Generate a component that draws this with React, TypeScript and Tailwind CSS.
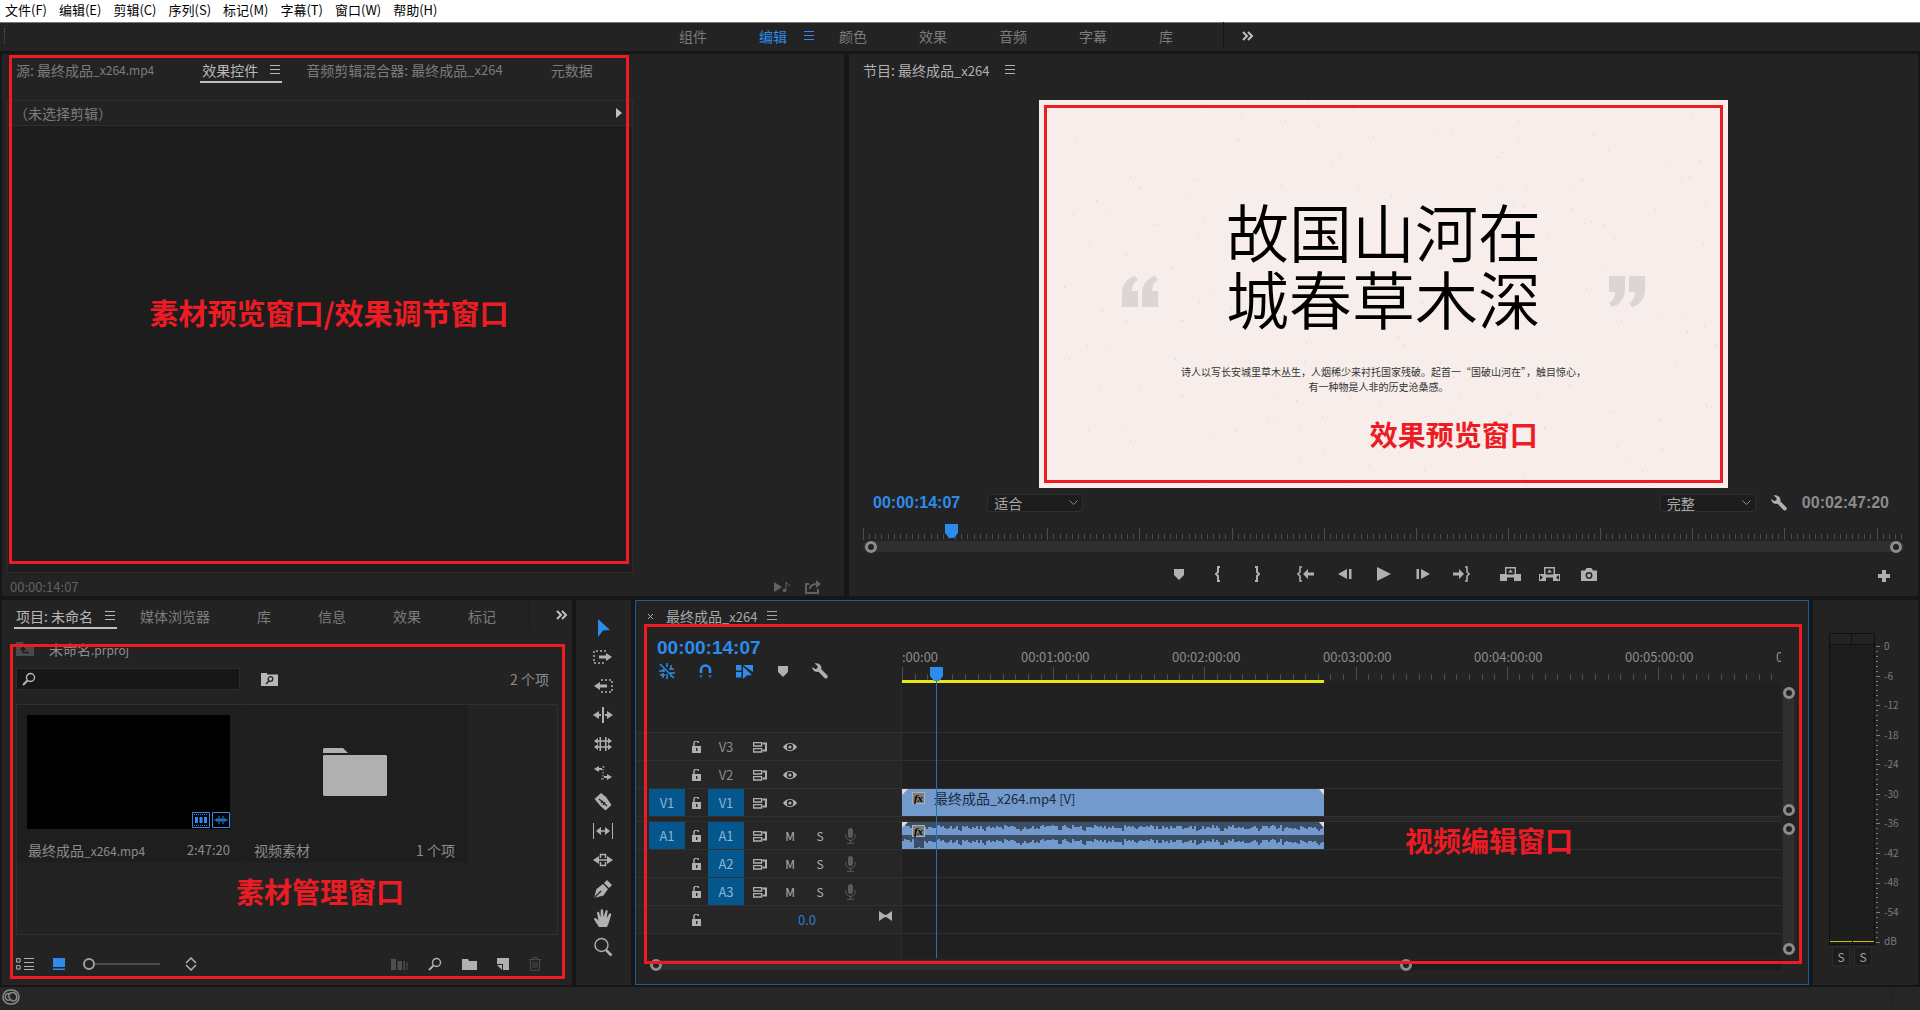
import { ReactNode } from 'react';

type IconProps = { children: ReactNode; w?: number; h?: number; className?: string };

function Svg({ children, w = 20, h = 20, className = '' }: IconProps) {
  return (
    <svg
      width={w}
      height={h}
      viewBox={`0 0 ${w} ${h}`}
      fill="currentColor"
      className={`shrink-0 ${className}`}
      aria-hidden="true"
    >
      {children}
    </svg>
  );
}

const MenuLines = () => (
  <Svg w={10} h={10}>
    <path d="M0 0h10v1H0zM0 4h10v1H0zM0 8h10v1H0z" />
  </Svg>
);

const Chevrons = () => (
  <Svg w={12} h={10} className="text-[#c0c0c0]">
    <path d="M1 1l4 4-4 4M6 1l4 4-4 4" fill="none" stroke="currentColor" strokeWidth="2" />
  </Svg>
);

const Magnifier = () => (
  <Svg w={14} h={14}>
    <g fill="none" stroke="currentColor">
      <circle cx="8.5" cy="5.5" r="4" strokeWidth="1.4" />
      <path d="M5.5 8.5L1 13" strokeWidth="2" />
    </g>
  </Svg>
);

const Wrench = () => (
  <Svg w={16} h={16}>
    <path d="M2.500.5C5.500-.5 9 1 9.400 4.600L9.300 6.200l6.200 6.300c1.200 1.600-1.400 4-3 2.600L6.600 8.800C3.500 9.600.3 7.400.2 4L3.200 6 5.600 5.300 5.400 2.800z" />
  </Svg>
);

const Marker = () => (
  <Svg w={10} h={12}>
    <path d="M0 1h10v6l-5 5-5-5z" />
  </Svg>
);

const Playhead = () => (
  <Svg w={13} h={14} className="text-[#2d8ceb]">
    <path d="M0 0h13v9l-4 5H4L0 9z" />
  </Svg>
);

const Lock = () => (
  <Svg w={10} h={12}>
    <path d="M0 5h9v7H0z" />
    <path d="M2 5V2.500a2 2 0 0 1 4.500-.5" fill="none" stroke="currentColor" strokeWidth="1.400" />
    <path d="M4 7h1.400v3H4z" fill="#232323" />
  </Svg>
);

const SyncLock = () => (
  <Svg w={14} h={12}>
    <g fill="none" stroke="currentColor" strokeWidth="1.300">
      <path d="M.6 1.600h8v3.400h-8zM.6 7.600h8V11h-8z" />
      <path d="M9.500 2.600H13v6.800H9.500" strokeWidth="2" />
    </g>
  </Svg>
);

const Eye = () => (
  <Svg w={14} h={10}>
    <path d="M0 5C3.500-.5 10.500-.5 14 5 10.500 10.500 3.500 10.500 0 5z" />
    <circle cx="7" cy="5" r="3.200" fill="#232323" />
    <circle cx="7" cy="5" r="1.600" />
  </Svg>
);

const Mic = () => (
  <Svg w={11} h={16} className="text-[#5a5a5a]">
    <rect x="3" y="0" width="5" height="10" rx="2.500" />
    <path d="M.8 6v2.500c0 5 9.400 5 9.400 0V6M5.500 12v3M2 15.300h7" fill="none" stroke="currentColor" />
  </Svg>
);

const CreativeCloud = () => (
  <Svg w={18} h={16} className="text-[#8a8a8a]">
    <g fill="none" stroke="currentColor" strokeWidth="1.500">
      <rect x="1" y="1" width="16" height="14" rx="7" />
      <path d="M8 5.200C5.500 3.300 3.200 5.500 3.300 8c.1 3 3.200 4.300 5.200 2.500" />
      <path d="M7 8.500c-1-4 2-5.500 4.500-5 3.600.7 4.300 5.500 2 7.700-2.300 2-4.500.3-6.500-2.700" />
    </g>
  </Svg>
);

type TabProps = { children: ReactNode; active?: boolean };

function Tab({ children, active = false }: TabProps) {
  return (
    <button
      type="button"
      className={`flex h-[29px] shrink-0 items-center border-b-2 px-[2px] pt-1 whitespace-nowrap ${
        active ? 'border-[#c0c0c0] text-[#b8b8b8]' : 'border-transparent text-[#7c7c7c]'
      }`}
    >
      {children}
      <span className="flex w-[22px] justify-end">{active && <MenuLines />}</span>
    </button>
  );
}

const Latin = ({ children }: { children: ReactNode }) => <span className="text-[13px]">{children}</span>;

const menus = ['文件(F)', '编辑(E)', '剪辑(C)', '序列(S)', '标记(M)', '字幕(T)', '窗口(W)', '帮助(H)'];
const workspaces = ['组件', '编辑', '颜色', '效果', '音频', '字幕', '库'];

function Header() {
  return (
    <header>
      <nav className="flex h-[23px] items-center gap-3 border-b border-[#777] bg-white px-[5px] pb-[2px] text-[13px] leading-4 text-black">
        {menus.map((menu) => (
          <button type="button" key={menu}>
            {menu}
          </button>
        ))}
      </nav>
      <nav className="flex h-7 items-center bg-[#232323] pb-[2px] text-[#7c7c7c]">
        <div className="ml-1 h-4 border-l border-dotted border-[#555]" />
        <div className="flex w-full items-center pl-[674px]">
          {workspaces.map((name) => (
            <button
              type="button"
              key={name}
              className={`flex w-20 items-center gap-[17px] ${name === '编辑' ? 'text-[#2d8ceb]' : ''}`}
            >
              {name}
              {name === '编辑' && <MenuLines />}
            </button>
          ))}
          <button type="button" aria-label="更多" className="-ml-4 flex h-7 items-center border-l border-[#181818] pl-[18px]">
            <Chevrons />
          </button>
        </div>
      </nav>
    </header>
  );
}

function EffectControls() {
  return (
    <section className="relative flex flex-col bg-[#232323] pr-[22px] pl-[5px]">
      <div className="flex h-[46px] gap-[22px] pl-[7px]">
        <Tab>
          源: 最终成品<span className="text-xs">_x264.mp4</span>
        </Tab>
        <Tab active>效果控件</Tab>
        <Tab>
          音频剪辑混合器: 最终成品<Latin>_x264</Latin>
        </Tab>
        <Tab>元数据</Tab>
      </div>
      <div className="flex w-[626px] flex-1 flex-col border border-[#2c2c2c] bg-[#1d1d1d]">
        <div className="flex h-[25px] items-center justify-between border-b border-[#2f2f2f] bg-[#232323] pr-[10px] pl-[6px] text-[#7c7c7c]">
          （未选择剪辑）
          <Svg w={6} h={10} className="text-[#c0c0c0]">
            <path d="M0 0l6 5-6 5z" />
          </Svg>
        </div>
      </div>
      <div className="flex h-[23px] items-center justify-between pt-1 pl-[3px] text-[13px] text-[#626262]">
        <span>00:00:14:07</span>
        <span className="flex gap-[14px]">
          <Svg w={17} h={14}>
            <path d="M0 2l8 5-8 5z" />
            <path d="M12 2v8M12 2l4 4" fill="none" stroke="currentColor" />
            <circle cx="10.500" cy="10.500" r="1.800" />
          </Svg>
          <Svg w={17} h={14}>
            <path d="M4 4H1v9h12V9M5 9c0-4 3-5 7-5" fill="none" stroke="currentColor" strokeWidth="2" />
            <path d="M11 0l5 4-5 4z" />
          </Svg>
        </span>
      </div>
      <div className="absolute top-px bottom-8 left-[7px] flex w-[620px] items-center justify-center border-[3px] border-[#ed1c24] pt-1 pl-5 text-[29px] font-bold text-[#ed1c24]">
        素材预览窗口/效果调节窗口
      </div>
    </section>
  );
}

function Quote({ flip = false }: { flip?: boolean }) {
  return (
    <Svg w={36} h={31} className={`mt-20 text-[#ddd5d3] ${flip ? 'rotate-180' : ''}`}>
      <path d="M13 0l3 4c-4 2-6 6-6 11h6v16H0V17C0 9 5 2 13 0zM33 0l3 4c-4 2-6 6-6 11h6v16H20V17C20 9 25 2 33 0z" />
    </Svg>
  );
}

// paper grain: fixed pseudo-random specks
const specks = Array.from({ length: 320 }, (_, i) => ({
  x: (i * 197 + ((i * i * 31) % 89)) % 689,
  y: (i * 113 + ((i * i * 17) % 61)) % 388,
}));

function VideoFrame() {
  return (
    <div className="relative aspect-[689/388] h-full bg-[#f7eeeb] text-black">
      <svg viewBox="0 0 689 388" className="absolute inset-0 h-full w-full" aria-hidden="true">
        {specks.map((s, i) => (
          <rect key={i} x={s.x} y={s.y} width="1" height={1 + (i % 2)} fill="#e3d9d5" />
        ))}
      </svg>
      <div className="relative flex flex-col items-center pt-24">
        <div className="flex gap-[68px]">
          <Quote />
          <h1 className="text-[63px] leading-[67px] font-[350] whitespace-nowrap">
            故国山河在
            <br />
            城春草木深
          </h1>
          <Quote flip />
        </div>
        <p className="mt-[34px] text-center text-[10px] leading-[15px] whitespace-nowrap text-[#333]">
          诗人以写长安城里草木丛生，人烟稀少来衬托国家残破。起首一“国破山河在”，触目惊心，
          <br />
          有一种物是人非的历史沧桑感。&emsp;
        </p>
      </div>
      <div className="absolute inset-[5px] border-[3px] border-[#ed1c24]" />
      <p className="absolute top-[318px] left-[48%] text-[28px] leading-8 font-bold whitespace-nowrap text-[#ed1c24]">
        效果预览窗口
      </p>
    </div>
  );
}

function Dropdown({ label, value }: { label: string; value: string }) {
  return (
    <span className="relative flex items-center">
      <select
        aria-label={label}
        className="h-[18px] w-24 appearance-none rounded-[2px] border border-[#2e2e2e] bg-[#1d1d1d] pl-[6px] text-sm leading-4 text-[#a8a8a8]"
      >
        <option>{value}</option>
      </select>
      <Svg w={9} h={6} className="absolute right-[5px] text-[#8a8a8a]">
        <path d="M.5.5l4 4 4-4" fill="none" stroke="currentColor" />
      </Svg>
    </span>
  );
}

const Ring = () => <span className="size-3 shrink-0 rounded-full border-[3px] border-[#8c8c8c] bg-[#232323]" />;

const transport: { name: string; icon: ReactNode }[][] = [
  [
    { name: '添加标记', icon: <Marker /> },
    {
      name: '标记入点',
      icon: (
        <Svg w={6} h={16}>
          <path d="M5 1H3v5L1 8l2 2v5h2" fill="none" stroke="currentColor" strokeWidth="2" />
        </Svg>
      ),
    },
    {
      name: '标记出点',
      icon: (
        <Svg w={6} h={16}>
          <path d="M1 1h2v5l2 2-2 2v5H1" fill="none" stroke="currentColor" strokeWidth="2" />
        </Svg>
      ),
    },
  ],
  [
    {
      name: '转到入点',
      icon: (
        <Svg w={17} h={16}>
          <path d="M5 1H3v5L1 8l2 2v5h2" fill="none" stroke="currentColor" strokeWidth="1.600" />
          <path d="M6 8l5-5v3.500h6v3h-6V13z" />
        </Svg>
      ),
    },
    {
      name: '后退一帧',
      icon: (
        <Svg w={14} h={12}>
          <path d="M9 1v10L0 6zM11 1h2.500v10H11z" />
        </Svg>
      ),
    },
    {
      name: '播放',
      icon: (
        <Svg w={14} h={14}>
          <path d="M0 0l14 7-14 7z" />
        </Svg>
      ),
    },
    {
      name: '前进一帧',
      icon: (
        <Svg w={14} h={12}>
          <path d="M5 1v10l9-5zM.5 1H3v10H.5z" />
        </Svg>
      ),
    },
    {
      name: '转到出点',
      icon: (
        <Svg w={17} h={16}>
          <path d="M12 1h2v5l2 2-2 2v5h-2" fill="none" stroke="currentColor" strokeWidth="1.600" />
          <path d="M11 8L6 3v3.500H0v3h6V13z" />
        </Svg>
      ),
    },
  ],
  [
    {
      name: '提升',
      icon: (
        <Svg w={21} h={14}>
          <path d="M0 7h7v7H0zM14 7h7v7h-7zM10.500 2.500l2.500 3H8zM7 9h7v1.400H7z" />
          <path d="M5.700.7h9.600v7.600H5.700z" fill="none" stroke="currentColor" strokeWidth="1.400" />
        </Svg>
      ),
    },
    {
      name: '提取',
      icon: (
        <Svg w={21} h={14}>
          <path d="M0 7h7v7H0zM14 7h7v7h-7zM10.500 2.500l2.500 3H8zM7 9h7v1.400H7z" />
          <path d="M5.700.7h9.600v7.600H5.700z" fill="none" stroke="currentColor" strokeWidth="1.400" />
          <path d="M1 8l3 2.500L1 13zM20 8l-3 2.500 3 2.500z" fill="#232323" />
        </Svg>
      ),
    },
    {
      name: '导出帧',
      icon: (
        <Svg w={16} h={13}>
          <path d="M0 2.500h4L5.500 0h5L12 2.500h4V13H0z" />
          <circle cx="8" cy="7.500" r="2.700" fill="none" stroke="#232323" strokeWidth="1.500" />
        </Svg>
      ),
    },
  ],
];

function ProgramMonitor() {
  const ticks = Array.from({ length: 170 }, (_, i) => i);
  return (
    <section className="flex flex-col bg-[#232323] px-[14px]">
      <div className="flex h-[46px]">
        <button type="button" className="flex h-8 items-center gap-4 text-[#b0b0b0]">
          <span>
            节目: 最终成品<Latin>_x264</Latin>
          </span>
          <MenuLines />
        </button>
      </div>
      <div className="flex min-h-0 flex-1 basis-[388px] justify-center">
        <VideoFrame />
      </div>
      <div className="flex h-[26px] items-center justify-between pt-[3px] pr-[15px] pl-[10px]">
        <div className="flex items-center gap-[27px]">
          <span className="font-[Liberation_Sans] text-base font-bold text-[#2d8ceb]">00:00:14:07</span>
          <Dropdown label="选择缩放级别" value="适合" />
        </div>
        <div className="flex items-center gap-[15px] text-[#b0b0b0]">
          <Dropdown label="选择回放分辨率" value="完整" />
          <button type="button" aria-label="设置">
            <Wrench />
          </button>
          <span className="font-[Liberation_Sans] text-base font-bold text-[#8c8c8c]">00:02:47:20</span>
        </div>
      </div>
      <div className="relative mt-[10px] h-[17px] overflow-hidden">
        <svg className="h-full w-full" aria-hidden="true">
          {ticks.map((i) => (
            <rect key={i} x={Math.round(i * 6.143)} y={i % 15 ? 10 : 4} width="1" height={i % 15 ? 5 : 12} fill="#4d4d4d" />
          ))}
        </svg>
        <span className="absolute top-0 left-[82px]">
          <Playhead />
        </span>
      </div>
      <div className="flex h-[11px] items-center justify-between rounded-full bg-[#303030] px-[2px]">
        <Ring />
        <Ring />
      </div>
      <div className="flex h-11 items-center text-[#b0b0b0]">
        <div className="w-8" />
        <div className="flex flex-1 justify-center gap-[10px]">
          {transport.map((group, g) => (
            <div key={g} className="flex">
              {group.map((b) => (
                <button type="button" key={b.name} aria-label={b.name} className="flex h-6 w-[39px] items-center justify-center">
                  {b.icon}
                </button>
              ))}
            </div>
          ))}
        </div>
        <button type="button" aria-label="按钮编辑器" className="w-8 pt-[3px] pl-[6px]">
          <Svg w={12} h={12}>
            <path d="M4 0h4v4h4v4H8v4H4V8H0V4h4z" />
          </Svg>
        </button>
      </div>
    </section>
  );
}

function ProjectPanel() {
  return (
    <section className="relative flex flex-col bg-[#232323] pr-[14px] pl-[14px] text-[#8c8c8c]">
      <div className="-mr-3 -ml-[2px] flex h-9 gap-[21px]">
        <Tab active>项目: 未命名</Tab>
        <Tab>媒体浏览器</Tab>
        <Tab>库</Tab>
        <Tab>信息</Tab>
        <Tab>效果</Tab>
        <Tab>标记</Tab>
        <button
          type="button"
          aria-label="更多面板"
          className="mr-[2px] -ml-3 flex h-[29px] flex-1 items-center justify-end border-l border-[#1a1a1a]"
        >
          <Chevrons />
        </button>
      </div>
      <div className="flex h-[26px] items-center gap-[15px]">
        <Svg w={18} h={14} className="text-[#4a4a4a]">
          <path d="M0 0h7l1 2h10v12H0z" />
          <path d="M7 11V6M4.500 8L7 5l2.500 3M7 10.500h6" fill="none" stroke="#1d1d1d" strokeWidth="1.500" />
        </Svg>
        <span>
          未命名<span className="text-xs">.prproj</span>
        </span>
      </div>
      <div className="mt-[6px] flex h-[22px] items-center pr-[9px]">
        <label className="flex h-full w-[224px] items-center border border-[#2c2c2c] bg-[#171717] pl-[5px] text-[#b8b8b8]">
          <Magnifier />
          <input type="search" aria-label="搜索项目" className="h-full w-full bg-transparent px-1 outline-none" />
        </label>
        <button type="button" aria-label="从查询创建新的搜索素材箱" className="ml-[21px] text-[#b8b8b8]">
          <Svg w={17} h={13}>
            <path d="M0 0h6v1.500h11V13H0z" />
            <circle cx="9.500" cy="6" r="2.300" fill="none" stroke="#232323" strokeWidth="1.300" />
            <path d="M8 8l-3 3" stroke="#232323" strokeWidth="1.500" />
          </Svg>
        </button>
        <span className="ml-auto">2 个项</span>
      </div>
      <div className="mt-[14px] flex flex-1 items-start gap-px border border-[#2f2f2f]">
        <article className="h-[158px] w-[225px] bg-[#1e1e1e] pt-[10px] pr-3 pl-[10px]">
          <div className="flex h-[114px] items-end justify-end gap-[2px] bg-black pb-px text-[#2d8ceb]">
            <Svg w={18} h={16}>
              <path d="M.5.5h17v15H.5z" fill="none" stroke="currentColor" />
              <path d="M3 5h3v6H3zM7.500 5h3v6h-3zM12 5h3v6h-3z" />
              <path d="M2 2.500h14M2 13.500h14" stroke="currentColor" strokeDasharray="1 1" />
            </Svg>
            <Svg w={18} h={16}>
              <path d="M.5.5h17v15H.5zM2 8h14M5 6v4M7 4v8M9 6v4M11 4v8M13 6v4" fill="none" stroke="currentColor" />
            </Svg>
          </div>
          <div className="flex h-[42px] items-center justify-between pl-px">
            <span>
              最终成品<span className="text-xs">_x264.mp4</span>
            </span>
            <span className="text-[13px]">2:47:20</span>
          </div>
        </article>
        <article className="h-[158px] w-[225px] bg-[#1e1e1e] pt-[10px] pr-[13px] pl-[11px]">
          <div className="flex h-[114px] items-center justify-center text-[#b0b0b0]">
            <Svg w={64} h={48}>
              <path d="M1 0h19l5 5H0V1zM1 7h62l1 1v39l-1 1H1l-1-1V8z" />
            </Svg>
          </div>
          <div className="flex h-[42px] items-center justify-between">
            <span>视频素材</span>
            <span>1 个项</span>
          </div>
        </article>
      </div>
      <div className="flex h-[50px] items-center pt-2 pr-[17px] text-[#b0b0b0]">
        <button type="button" aria-label="列表视图">
          <Svg w={18} h={14}>
            <path d="M.6 1.600h3.500v3.500H.6zM.6 8.600h3.500v3.500H.6z" fill="none" stroke="currentColor" />
            <path d="M8 1h10v1H8zM8 5h10v1H8zM8 9h10v1H8zM8 12h10v1H8z" />
          </Svg>
        </button>
        <button type="button" aria-label="图标视图" className="ml-[19px] text-[#2d8ceb]">
          <Svg w={12} h={12}>
            <path d="M0 0h12v9H0zM0 10.500h12V12H0z" />
          </Svg>
        </button>
        <input
          type="range"
          aria-label="调整图标和缩览图大小"
          defaultValue={0}
          className="ml-[18px] w-[77px] appearance-none bg-transparent [&::-webkit-slider-runnable-track]:h-[2px] [&::-webkit-slider-runnable-track]:bg-[#4d4d4d] [&::-webkit-slider-thumb]:-mt-[5px] [&::-webkit-slider-thumb]:size-3 [&::-webkit-slider-thumb]:appearance-none [&::-webkit-slider-thumb]:rounded-full [&::-webkit-slider-thumb]:border-2 [&::-webkit-slider-thumb]:border-solid [&::-webkit-slider-thumb]:border-[#a0a0a0] [&::-webkit-slider-thumb]:bg-[#232323]"
        />
        <button type="button" aria-label="排序图标" className="ml-[25px]">
          <Svg w={12} h={14}>
            <path d="M1 6l5-5 5 5M1 8l5 5 5-5" fill="none" stroke="currentColor" strokeWidth="1.500" />
          </Svg>
        </button>
        <div className="ml-auto flex items-center gap-5">
          <Svg w={17} h={11} className="text-[#4f4f4f]">
            <path d="M0 0h5v11H0zM6.500 2H11v9H6.500zM12.500 2h1.500v9h-1.500zM15.500 3h1v8h-1z" />
          </Svg>
          <Magnifier />
          <Svg w={15} h={11}>
            <path d="M0 0h6l1 2h8v9H0z" />
          </Svg>
          <Svg w={12} h={12}>
            <path d="M0 0h12v12H6V6H0z" />
            <path d="M0 7h5v5z" />
          </Svg>
          <Svg w={12} h={14} className="text-[#4a4a4a]">
            <path d="M0 2.500h12M4 2V.6h4V2M1.500 3v10.400h9V3M4 5v6M6 5v6M8 5v6" fill="none" stroke="currentColor" />
          </Svg>
        </div>
      </div>
      <div className="absolute top-11 right-[7px] bottom-[6px] left-2 border-[3px] border-[#ed1c24]" />
      <p className="absolute top-[275px] left-[234px] text-[28px] leading-8 font-bold whitespace-nowrap text-[#ed1c24]">
        素材管理窗口
      </p>
    </section>
  );
}

const tools: { name: string; icon: ReactNode }[] = [
  { name: '选择工具', icon: <path d="M5 1l12 11-7 .5L5 19z" fill="#2d8ceb" /> },
  {
    name: '向前选择轨道工具',
    icon: (
      <>
        <path d="M13 4H1v12h12" fill="none" stroke="currentColor" strokeWidth="1.500" strokeDasharray="2 2" />
        <path d="M6 8.500h7V6l6 4-6 4v-2.500H6z" />
      </>
    ),
  },
  {
    name: '向后选择轨道工具',
    icon: (
      <>
        <path d="M8 4h11v12H8" fill="none" stroke="currentColor" strokeWidth="1.500" strokeDasharray="2 2" />
        <path d="M14 8.500H7V6l-6 4 6 4v-2.500h7z" />
      </>
    ),
  },
  { name: '波纹编辑工具', icon: <path d="M9 2h2v16H9zM0 10l6-4v3h2v2H6v3zM20 10l-6-4v3h-2v2h2v3z" /> },
  {
    name: '滚动编辑工具',
    icon: (
      <path d="M6.500 3H8v14H6.500zM12 3h1.500v14H12zM1 7l4-3v2.200h10V4l4 3-4 3V7.800H5V10zM1 13l4-3v2.200h10V10l4 3-4 3v-2.200H5V16z" />
    ),
  },
  {
    name: '比率拉伸工具',
    icon: (
      <>
        <path d="M1 6l5-3v2h3v2H6v2zM19 14l-5-3v2h-3v2h3v2z" />
        <path d="M10 3v14M10 4h3M8 16h3" fill="none" stroke="currentColor" strokeDasharray="1.500 1.500" />
      </>
    ),
  },
  {
    name: '剃刀工具',
    icon: (
      <>
        <path d="M8 1l5 4 5.500 8-6 5.500-4.500-4L1.500 7z" />
        <path d="M6 7l8 7M10 9l-2 2M12 10l-2 3" stroke="#232323" fill="none" strokeWidth="1.300" />
      </>
    ),
  },
  {
    name: '外滑工具',
    icon: <path d="M-.5 2H1v16H-.5zM19 2h1.500v16H19zM3 10l5-4v3.200h4V6l5 4-5 4v-3.200H8V14z" />,
  },
  {
    name: '内滑工具',
    icon: (
      <>
        <path d="M0 10l6-4v3.200h8V6l6 4-6 4v-3.200H6V14z" />
        <path d="M7.500 8V4.500h5V8M7.500 12v3.500h5V12" fill="none" stroke="currentColor" strokeWidth="1.500" />
      </>
    ),
  },
  {
    name: '钢笔工具',
    icon: (
      <>
        <path d="M1 19L3.500 10l6.500-5 5 5-4.500 6.500zM11 4l3-3 5 5-3 3z" />
        <path d="M1.500 18.500L8 12" stroke="#232323" strokeWidth="1.300" />
      </>
    ),
  },
  {
    name: '手形工具',
    icon: (
      <path d="M6 19C4 16 2 13 1 11c0-1.500 2-1.500 3 0l1.500 1.500L4 5c0-1.700 2-1.700 2.300 0L7.500 9.500 7.700 2.500c.2-1.700 2.200-1.700 2.400 0L10.500 9 12.500 3c.6-1.500 2.400-1 2.100.6L13.600 10l2.500-4c1-1.300 2.400-.4 2 1L16 14c-.5 2-1.500 3.500-2 5z" />
    ),
  },
  {
    name: '缩放工具',
    icon: (
      <g fill="none" stroke="currentColor">
        <circle cx="8.500" cy="8" r="6.500" strokeWidth="1.400" />
        <path d="M13 13l5.500 5.500" strokeWidth="2.500" />
      </g>
    ),
  },
];

function Toolbar() {
  return (
    <section className="flex flex-col items-center gap-[9px] bg-[#232323] pt-[18px] pr-[2px] text-[#b0b0b0]">
      {tools.map((tool) => (
        <button type="button" key={tool.name} aria-label={tool.name} className="h-5">
          <Svg>{tool.icon}</Svg>
        </button>
      ))}
    </section>
  );
}

const PX_PER_MINUTE = 151.2;
const CLIP_WIDTH = 422;
const rulerLabels = ['00:01:00:00', '00:02:00:00', '00:03:00:00', '00:04:00:00', '00:05:00:00', '00:06:00:00'];

function Ruler() {
  const ticks = Array.from({ length: 70 }, (_, i) => i);
  return (
    <div className="relative h-full flex-1 overflow-hidden">
      <div className="flex h-full pt-[15px] text-[13px] leading-[18px] whitespace-nowrap text-[#8c8c8c]">
        <span className="w-[119px] shrink-0">:00:00</span>
        {rulerLabels.map((label) => (
          <span key={label} className="w-[151px] shrink-0">
            {label}
          </span>
        ))}
      </div>
      <svg className="absolute inset-x-0 top-[34px] h-4 w-full" aria-hidden="true">
        {ticks.map((i) => (
          <rect
            key={i}
            x={Math.round((i * PX_PER_MINUTE) / 12)}
            y={i % 12 ? 7 : 0}
            width="1"
            height={i % 12 ? 6 : 13}
            fill="#4d4d4d"
          />
        ))}
        <rect x="0" y="13" width={CLIP_WIDTH} height="3" fill="#e6e619" />
      </svg>
    </div>
  );
}

const FxBadge = () => (
  <span className="flex h-3 w-[13px] shrink-0 items-center justify-center border border-[#b0b0b0] bg-[#7c7c7c] font-[Liberation_Serif] text-[11px] leading-3 font-bold text-black italic">
    fx
  </span>
);

const Corners = () => (
  <svg className="absolute inset-x-0 top-0 h-[6px] w-full" aria-hidden="true">
    <path d="M0 0h6L0 6z" fill="#ddd" />
    <path d={`M${CLIP_WIDTH} 0h-5l5 6z`} fill="#ddd" />
  </svg>
);

function channel(base: number, seed: number) {
  let d = `M0 ${base}`;
  for (let x = 0; x <= CLIP_WIDTH; x += 2) {
    const noise = Math.abs(Math.sin(x * 12.9 + 1) * 43758.5) % 1;
    const dip = Math.sin(x * 0.41) * Math.sin(x * 0.093) > 0.62 ? 3 : 0;
    const quiet = seed > 1 && x > 10 && x < 21 ? 6 : 0;
    const level = Math.max(1, Math.round(10 - noise * 4 - dip - quiet));
    d += `V${base - level}H${x + 2}`;
  }
  return `${d}V${base}z`;
}

type TrackProps = {
  name?: string;
  source?: boolean;
  audio?: boolean;
  targeted?: boolean;
  children?: ReactNode;
};

function Track({ name, source, audio, targeted, children }: TrackProps) {
  return (
    <div className="flex h-7 border-b border-[#303030]">
      <div className="grid w-[265px] grid-cols-[36px_23px_36px_32px_28px_32px_28px] items-center justify-items-center bg-[#262626] pl-[13px] text-[#b0b0b0]">
        <button
          type="button"
          aria-label={`源修补 ${name}`}
          className={`h-[27px] w-9 text-[13px] text-[#8db4d2] ${source ? 'bg-[#04568c]' : ''}`}
        >
          {source && name}
        </button>
        <Lock />
        <button
          type="button"
          className={`h-[27px] w-9 text-[13px] ${targeted ? 'bg-[#04568c] text-[#8db4d2]' : 'text-[#8c8c8c]'}`}
        >
          {name}
        </button>
        <SyncLock />
        {audio ? (
          <>
            <button type="button" className="text-xs">M</button>
            <button type="button" className="text-xs">S</button>
            <Mic />
          </>
        ) : (
          <Eye />
        )}
      </div>
      <div className="flex-1 overflow-hidden border-l border-[#2c2c2c] bg-[#202020]">{children}</div>
    </div>
  );
}

function VerticalScroll({ className }: { className: string }) {
  return (
    <div className={`flex w-[11px] flex-col items-center justify-between rounded-full bg-[#303030] ${className}`}>
      <Ring />
      <Ring />
    </div>
  );
}

function Timeline() {
  return (
    <section className="relative flex flex-col overflow-hidden border border-[#1d5c9c] bg-[#232323]">
      <div className="flex h-8 items-center pb-[2px] pl-[11px] text-[#a8a8a8]">
        <button type="button" aria-label="关闭" className="mr-3">
          <Svg w={7} h={7}>
            <path d="M1 1l5 5M6 1L1 6" stroke="currentColor" fill="none" />
          </Svg>
        </button>
        <span className="mr-[10px]">
          最终成品<Latin>_x264</Latin>
        </span>
        <MenuLines />
      </div>
      <div className="flex">
        <div className="relative min-w-0 flex-1">
          <div className="flex h-[50px]">
            <div className="w-[266px] shrink-0 pl-[21px]">
              <p className="pt-[3px] font-[Liberation_Sans] text-[19px] leading-6 font-bold text-[#2d8ceb]">00:00:14:07</p>
              <div className="flex h-[22px] items-center pl-[2px] text-[#b0b0b0]">
                <div className="flex w-[119px] items-center gap-6 text-[#2d8ceb]">
                  <Svg w={16} h={16}>
                    <path
                      d="M1 1l14 14M8 0v4M12 2v4M4 6v2M0 8h6M10 6h5M11 10h5M4 10v5M8 11v5M1 12h5M12 12v2"
                      fill="none"
                      stroke="currentColor"
                      strokeWidth="1.500"
                    />
                  </Svg>
                  <Svg w={13} h={14}>
                    <path d="M2 9V6a4.500 4.500 0 0 1 9 0v3" fill="none" stroke="currentColor" strokeWidth="2.600" />
                    <path d="M.7 11h2.600v2.500H.7zM9.700 11h2.600v2.500H9.700z" opacity=".6" />
                  </Svg>
                  <Svg w={17} h={15}>
                    <path d="M0 1h5.500v5.500H0zM0 8h5.500v5.500H0zM7 1h10v7z" />
                    <path d="M7 2.500L16 11l-5 .5L7 15z" />
                  </Svg>
                </div>
                <Marker />
                <span className="ml-6">
                  <Wrench />
                </span>
              </div>
            </div>
            <Ruler />
          </div>
          <div className="flex h-[50px] border-b border-[#303030]">
            <div className="w-[265px]" />
            <div className="flex-1 border-l border-[#2c2c2c] bg-[#202020]" />
          </div>
          <Track name="V3" />
          <Track name="V2" />
          <Track name="V1" source targeted>
            <div className="relative flex h-[27px] items-start bg-[#729acc] pt-[3px] pl-[10px]" style={{ width: CLIP_WIDTH }}>
              <Corners />
              <FxBadge />
              <span className="ml-[9px] leading-3 text-[#1c2a3c]">
                最终成品<Latin>_x264.mp4 [V]</Latin>
              </span>
            </div>
          </Track>
          <div className="h-[5px] border-b border-[#303030] bg-[#262626]" />
          <Track name="A1" source targeted audio>
            <div className="relative h-[27px] bg-[#3a4e68] pt-[3px] pl-[10px]" style={{ width: CLIP_WIDTH }}>
              <svg className="absolute inset-0 h-full w-full text-[#729acc]" fill="currentColor" aria-hidden="true">
                <path d={channel(13, 1)} />
                <path d={channel(27, 2)} />
              </svg>
              <Corners />
              <div className="relative w-[13px]">
                <FxBadge />
              </div>
            </div>
          </Track>
          <Track name="A2" targeted audio />
          <Track name="A3" targeted audio />
          <div className="flex h-7 border-b border-[#303030]">
            <div className="flex w-[265px] items-center bg-[#262626] pr-[9px] pl-14 text-[#b0b0b0]">
              <Lock />
              <span className="ml-24 text-[13px] text-[#2d7fd0]">0.0</span>
              <Svg w={13} h={10} className="mb-2 ml-auto">
                <path d="M0 0l5.500 3.800h2L13 0v10L7.500 6.200h-2L0 10z" />
              </Svg>
            </div>
            <div className="flex-1 border-l border-[#2c2c2c] bg-[#202020]" />
          </div>
          <div className="flex h-6">
            <div className="w-[265px]" />
            <div className="flex-1 border-l border-[#2c2c2c] bg-[#202020]" />
          </div>
          <div className="absolute top-[34px] bottom-0 left-[294px] flex flex-col items-center">
            <Playhead />
            <div className="w-px flex-1 bg-[#2472bd]" />
          </div>
        </div>
        <div className="flex w-[27px] flex-col pt-[54px] pl-[2px]">
          <VerticalScroll className="h-[129px]" />
          <VerticalScroll className="mt-[7px] h-[132px]" />
        </div>
      </div>
      <div className="mt-[2px] mr-[27px] mb-[14px] ml-[14px] flex h-[10px] bg-[#1d1d1d]">
        <div className="flex w-[762px] items-center justify-between rounded-full bg-[#303030]">
          <Ring />
          <Ring />
        </div>
      </div>
      <div className="absolute top-[23px] right-[6px] bottom-5 left-2 border-[3px] border-[#ed1c24]" />
      <p className="absolute top-[223px] left-[769px] text-[28px] leading-8 font-bold whitespace-nowrap text-[#ed1c24]">
        视频编辑窗口
      </p>
    </section>
  );
}

const levels = ['0', '-6', '-12', '-18', '-24', '-30', '-36', '-42', '-48', '-54', 'dB'];

function AudioMeters() {
  const ticks = Array.from({ length: 61 }, (_, i) => i);
  return (
    <section className="bg-[#232323] pt-[33px] pl-4 text-[#7c7c7c]">
      <div className="flex">
        <div className="flex h-[312px] w-[46px] flex-col border border-[#0f0f0f] bg-[#1d1d1d]">
          <div className="grid h-[11px] grid-cols-2 divide-x divide-[#0f0f0f] border-b border-[#0f0f0f] bg-[#232323]">
            <span />
            <span />
          </div>
          <div className="mt-auto mb-[2px] grid h-px grid-cols-2 gap-px">
            <span className="bg-[#c4c400]" />
            <span className="bg-[#c4c400]" />
          </div>
        </div>
        <Svg w={6} h={312}>
          {ticks.map((i) => (
            <rect key={i} x="1" y={Math.round(13 + i * 4.93)} width={i % 6 ? 2 : 4} height="1" />
          ))}
        </Svg>
        <div className="mt-[7px] ml-[3px] flex h-[307px] flex-col justify-between text-[10px] leading-3">
          {levels.map((level) => (
            <span key={level}>{level}</span>
          ))}
        </div>
      </div>
      <div className="ml-[3px] flex gap-1">
        <button type="button" className="h-[19px] w-[18px] border border-[#2a2a2a] bg-[#1d1d1d] text-xs leading-4 text-[#a0a0a0]">
          S
        </button>
        <button type="button" className="h-[19px] w-[18px] border border-[#2a2a2a] bg-[#1d1d1d] text-xs leading-4 text-[#a0a0a0]">
          S
        </button>
      </div>
    </section>
  );
}

export default function App() {
  return (
    <div
      lang="zh-CN"
      className="flex min-h-screen flex-col bg-[#161616] font-['Noto_Sans_CJK_SC',sans-serif] text-sm leading-5"
    >
      <Header />
      <main className="flex flex-1 flex-col gap-1 px-[2px] pt-[3px] pb-[2px]">
        <div className="grid flex-1 grid-cols-[842fr_1069fr] gap-[5px]">
          <EffectControls />
          <ProgramMonitor />
        </div>
        <div className="grid grid-cols-[570fr_55px_1174fr_105px] gap-1">
          <ProjectPanel />
          <Toolbar />
          <Timeline />
          <AudioMeters />
        </div>
      </main>
      <footer className="flex h-[23px] items-center justify-between bg-[#262626] pr-7 pb-1 pl-[2px]">
        <CreativeCloud />
        <div className="h-4 border-l border-[#1e1e1e]" />
      </footer>
    </div>
  );
}
